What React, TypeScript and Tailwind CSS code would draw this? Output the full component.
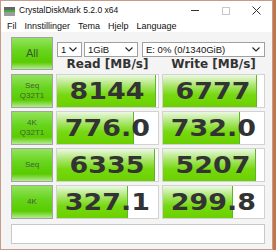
import React from "react";

type Row = {
  l1: string;
  l2?: string;
  read: string;
  rp: number;
  write: string;
  wp: number;
};

const rows: Row[] = [
  { l1: "Seq", l2: "Q32T1", read: "8144", rp: 0.98, write: "6777", wp: 0.93 },
  { l1: "4K", l2: "Q32T1", read: "776.0", rp: 0.76, write: "732.0", wp: 0.76 },
  { l1: "Seq", read: "6335", rp: 0.97, write: "5207", wp: 0.92 },
  { l1: "4K", read: "327.1", rp: 0.7, write: "299.8", wp: 0.69 },
];

const greenBtn =
  "border border-[#a3a3a3] bg-[linear-gradient(to_bottom,#93e35e_0%,#68d51e_40%,#5acb00_78%,#b4eb93_100%)]";

function Chevron() {
  return (
    <svg width="8" height="5" viewBox="0 0 8 5" className="shrink-0">
      <polyline points="0.5,0.5 4,4 7.5,0.5" fill="none" stroke="#222" strokeWidth="1.1" />
    </svg>
  );
}

function Combo({ text, w }: { text: string; w: string }) {
  return (
    <div
      className={`${w} flex h-[15px] items-center justify-between border border-[#a0a0a0] bg-white pl-[3px] pr-[4px] text-[9.5px] leading-none text-[#111]`}
    >
      <span>{text}</span>
      <Chevron />
    </div>
  );
}

function Cell({ value, pct }: { value: string; pct: number }) {
  return (
    <div className="relative h-[34px] w-[103px] overflow-hidden border border-[#d2d2d2] bg-white">
      <div
        className="absolute inset-y-0 left-0 border-r border-[#5fb52a] bg-[linear-gradient(to_bottom,#ecf8e2_0%,#a6e566_35%,#76d910_62%,#6bd000_100%)]"
        style={{ width: `${pct * 100}%` }}
      />
      <div className="relative flex h-full items-center justify-center">
        <span className="inline-block scale-x-[1.17] font-['DejaVu_Sans',sans-serif] text-[23px] font-bold leading-none text-[#333]">
          {value}
        </span>
      </div>
    </div>
  );
}

export default function App() {
  return (
    <div className="flex h-[250px] w-[276px] bg-[#c0764a] font-['Liberation_Sans',Arial,sans-serif]">
      <div className="flex h-[250px] w-[273px] flex-col border border-[#c79b8a] bg-[#f4f4f4]">
        {/* Title bar */}
        <div className="flex h-[19px] items-center bg-white">
          <svg width="11" height="9" viewBox="0 0 11 9" className="ml-[3px] mt-[1px]">
            <rect x="0" y="0" width="11" height="3" fill="#666" />
            <rect x="0" y="3" width="11" height="2" fill="#3fae3a" />
            <rect x="0" y="5" width="11" height="4" fill="#9c9c9c" />
          </svg>
          <span className="ml-[4px] text-[8.5px] text-[#111]">CrystalDiskMark 5.2.0 x64</span>
          <div className="ml-auto flex h-full">
            <div className="flex w-[31px] items-center justify-center">
              <div className="h-px w-[8px] bg-[#333]" />
            </div>
            <div className="flex w-[31px] items-center justify-center">
              <div className="h-[8px] w-[8px] border border-[#c8c8c8]" />
            </div>
            <div className="flex w-[31px] items-center justify-center">
              <svg width="9" height="9" viewBox="0 0 9 9">
                <path d="M0.5 0.5 L8.5 8.5 M8.5 0.5 L0.5 8.5" stroke="#333" strokeWidth="1" />
              </svg>
            </div>
          </div>
        </div>

        {/* Menu */}
        <div className="flex h-[12px] items-center gap-[8px] bg-white pl-[6px] text-[9px] leading-none text-[#111]">
          <span>Fil</span>
          <span>Innstillinger</span>
          <span>Tema</span>
          <span>Hjelp</span>
          <span>Language</span>
        </div>

        {/* Content */}
        <div className="flex flex-col pl-[10px] pt-[5px]">
          <div className="flex gap-[3px]">
            <div className={`${greenBtn} flex h-[33px] w-[42px] items-center justify-center text-[11px] text-[#3c5a2c]`}>
              All
            </div>
            <div className="flex w-[209px] flex-col">
              <div className="mt-[5px] flex pl-px">
                <Combo text="1" w="w-[25px]" />
                <Combo text="1GiB" w="ml-[2px] w-[54px]" />
                <Combo text="E: 0% (0/1340GiB)" w="ml-[4px] w-[123px]" />
              </div>
              <div className="grid h-[13px] grid-cols-2 gap-[3px] font-['DejaVu_Sans',sans-serif] text-[12px] font-bold leading-none text-[#333]">
                <div className="flex items-center justify-center">Read [MB/s]</div>
                <div className="flex items-center justify-center">Write [MB/s]</div>
              </div>
            </div>
          </div>

          <div className="mt-[4px] flex flex-col gap-[3px]">
            {rows.map((r, i) => (
              <div key={i} className="flex gap-[3px]">
                <div
                  className={`${greenBtn} flex h-[34px] w-[42px] flex-col items-center justify-center text-[8px] leading-[10px] text-[#44603a]`}
                >
                  <span>{r.l1}</span>
                  {r.l2 && <span>{r.l2}</span>}
                </div>
                <Cell value={r.read} pct={r.rp} />
                <Cell value={r.write} pct={r.wp} />
              </div>
            ))}
          </div>

          <div className="mt-[5px] h-[20px] w-[254px] border border-[#c8c8c8] bg-white" />
        </div>
      </div>
    </div>
  );
}
